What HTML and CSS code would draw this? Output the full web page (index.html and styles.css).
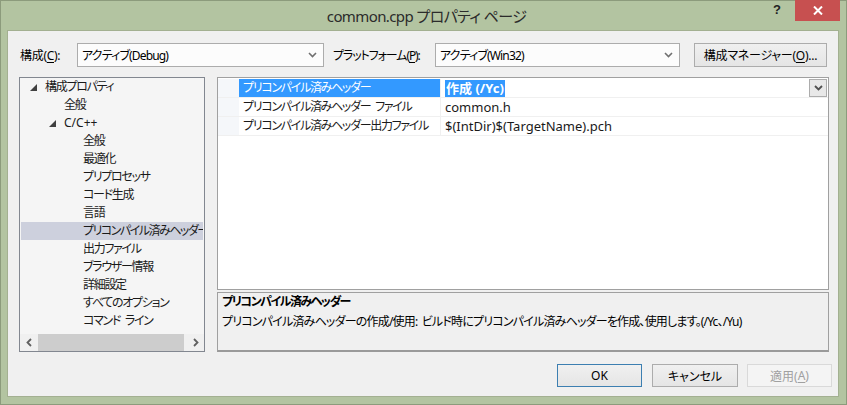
FILE: index.html
```html
<!DOCTYPE html>
<html lang="ja">
<head>
<meta charset="utf-8">
<title>common.cpp プロパティ ページ</title>
<link rel="stylesheet" href="styles.css">
</head>
<body>
<div class="window">
  <div class="titlebar">
    <div class="tb-spacer"></div>
    <div class="title">common.cpp プロパティ ページ</div>
    <div class="tb-controls">
      <span class="help">?</span>
      <span class="close"><svg width="10" height="9" viewBox="0 0 10 9"><path d="M1 0.5 L9 8.5 M9 0.5 L1 8.5" stroke="#fff" stroke-width="2"/></svg></span>
    </div>
  </div>
  <div class="client">
    <div class="toprow">
      <span class="lbl lbl-config">構成(<u>C</u>):</span>
      <div class="combo combo-config"><span class="combo-text">アクティブ(Debug)</span><svg class="chev" width="9" height="6" viewBox="0 0 9 6"><path d="M1 1 L4.5 4.5 L8 1" stroke="#707070" stroke-width="1.6" fill="none"/></svg></div>
      <span class="lbl lbl-platform">プラットフォーム(<u>P</u>):</span>
      <div class="combo combo-platform"><span class="combo-text">アクティブ(Win32)</span><svg class="chev" width="9" height="6" viewBox="0 0 9 6"><path d="M1 1 L4.5 4.5 L8 1" stroke="#707070" stroke-width="1.6" fill="none"/></svg></div>
      <div class="btn btn-manager">構成マネージャー(<u>O</u>)...</div>
    </div>
    <div class="main">
      <div class="tree">
        <div class="tree-list">
          <div class="node lv0"><span class="arrow"><svg width="7" height="7" viewBox="0 0 7 7"><polygon points="7,0 7,7 0,7" fill="#404040"/></svg></span>構成プロパティ</div>
          <div class="node lv1"><span class="arrow"></span>全般</div>
          <div class="node lv1 latin"><span class="arrow"><svg width="7" height="7" viewBox="0 0 7 7"><polygon points="7,0 7,7 0,7" fill="#404040"/></svg></span>C/C++</div>
          <div class="node lv2"><span class="arrow"></span>全般</div>
          <div class="node lv2"><span class="arrow"></span>最適化</div>
          <div class="node lv2"><span class="arrow"></span>プリプロセッサ</div>
          <div class="node lv2"><span class="arrow"></span>コード生成</div>
          <div class="node lv2"><span class="arrow"></span>言語</div>
          <div class="node lv2 selected"><span class="arrow"></span>プリコンパイル済みヘッダー</div>
          <div class="node lv2"><span class="arrow"></span>出力ファイル</div>
          <div class="node lv2"><span class="arrow"></span>ブラウザー情報</div>
          <div class="node lv2"><span class="arrow"></span>詳細設定</div>
          <div class="node lv2"><span class="arrow"></span>すべてのオプション</div>
          <div class="node lv2"><span class="arrow"></span>コマンド ライン</div>
        </div>
        <div class="hscroll">
          <span class="sb-btn"><svg width="6" height="9" viewBox="0 0 6 9"><path d="M5 1 L1.5 4.5 L5 8" stroke="#606060" stroke-width="1.8" fill="none"/></svg></span>
          <span class="sb-track"><span class="sb-thumb"></span></span>
          <span class="sb-btn"><svg width="6" height="9" viewBox="0 0 6 9"><path d="M1 1 L4.5 4.5 L1 8" stroke="#606060" stroke-width="1.8" fill="none"/></svg></span>
        </div>
      </div>
      <div class="rightpane">
        <div class="grid">
          <div class="prow active">
            <span class="gutter"></span>
            <span class="pname">プリコンパイル済みヘッダー</span>
            <span class="pvalue"><span class="sel">作成 (/Yc)</span><span class="dd"><svg width="9" height="6" viewBox="0 0 9 6"><path d="M1 1 L4.5 4.5 L8 1" stroke="#505050" stroke-width="1.8" fill="none"/></svg></span></span>
          </div>
          <div class="prow">
            <span class="gutter"></span>
            <span class="pname">プリコンパイル済みヘッダー ファイル</span>
            <span class="pvalue">common.h</span>
          </div>
          <div class="prow">
            <span class="gutter"></span>
            <span class="pname">プリコンパイル済みヘッダー出力ファイル</span>
            <span class="pvalue">$(IntDir)$(TargetName).pch</span>
          </div>
        </div>
        <div class="desc">
          <div class="desc-title">プリコンパイル済みヘッダー</div>
          <div class="desc-text">プリコンパイル済みヘッダーの作成/使用: ビルド時にプリコンパイル済みヘッダーを作成、使用します。(/Yc、/Yu)</div>
        </div>
      </div>
    </div>
    <div class="buttons">
      <div class="btn btn-ok">OK</div>
      <div class="btn btn-cancel">キャンセル</div>
      <div class="btn btn-apply">適用(<u>A</u>)</div>
    </div>
  </div>
</div>
</body>
</html>
```

FILE: styles.css
```css
* { box-sizing: border-box; }
html, body { margin: 0; padding: 0; }
body {
  font-family: "Noto Sans", "Noto Sans CJK JP", sans-serif;
  font-size: 12px;
  color: #000;
  font-feature-settings: "palt";
  background: #b3c4a1;
}
u { text-decoration: underline; text-underline-offset: 2px; }

.window {
  width: 847px;
  height: 405px;
  background: #b3c4a1;
  border: 1px solid #8c9b7c;
  display: flex;
  flex-direction: column;
}

.titlebar {
  height: 29px;
  display: grid;
  grid-template-columns: 1fr auto 1fr;
  align-items: start;
}
.title {
  font-size: 15px;
  color: #2b2b2b;
  line-height: 30px;
  padding-left: 6px;
  letter-spacing: -0.6px;
}
.tb-controls {
  display: flex;
  justify-content: flex-end;
  align-items: flex-start;
  margin-top: -1px;
  margin-right: 6px;
}
.help {
  font-family: "Liberation Sans", sans-serif;
  font-weight: bold;
  font-size: 13px;
  color: #222;
  margin-right: 14px;
  margin-top: 2px;
  line-height: 16px;
}
.close {
  width: 45px;
  height: 21px;
  background: #c75050;
  display: flex;
  align-items: center;
  justify-content: center;
}

.client {
  width: 832px;
  height: 367px;
  margin-left: 6px;
  background: #f0f0f0;
  border: 1px solid #a3b091;
  padding: 12px 6px 9px 11px;
  display: flex;
  flex-direction: column;
}

.toprow {
  height: 24px;
  display: flex;
  align-items: center;
  padding-left: 1px;
}
.lbl { white-space: nowrap; }
.lbl-config { width: 57px; letter-spacing: -0.3px; }
.lbl-platform { width: 102px; margin-left: 9px; letter-spacing: -1.1px; }
.combo {
  height: 24px;
  border: 1px solid #acacac;
  background: #fcfcfc;
  display: flex;
  align-items: center;
  justify-content: space-between;
  padding: 0 6px 0 4px;
}
.combo-text { letter-spacing: -0.85px; }
.combo-config { width: 247px; }
.combo-platform { width: 245px; }

.btn {
  height: 24px;
  border: 1px solid #acacac;
  background: linear-gradient(#f0f0f0, #e5e5e5);
  display: flex;
  align-items: center;
  justify-content: center;
  white-space: nowrap;
}
.btn-manager { width: 133px; margin-left: 14px; letter-spacing: -0.25px; }

.main {
  margin-top: 10px;
  height: 275px;
  margin-right: 3px;
  display: flex;
  gap: 12px;
}

.tree {
  width: 186px;
  border: 1px solid #828790;
  background: #f5f5f5;
  display: flex;
  flex-direction: column;
}
.tree-list {
  flex: 1;
  overflow: hidden;
}
.node {
  height: 18px;
  line-height: 18px;
  display: flex;
  align-items: center;
  white-space: pre;
  overflow: hidden;
  padding-left: 6px;
  color: #1a1a1a;
  letter-spacing: -1.3px;
  word-spacing: 3px;
}
.node.latin { letter-spacing: 0; }
.node.lv1 { padding-left: 25px; }
.node.lv2 { padding-left: 44px; }
.node.selected { background: #cdd0dd; margin: 0 1px; padding-left: 43px; letter-spacing: -1.5px; }
.arrow {
  width: 19px;
  flex: none;
  display: flex;
  align-items: center;
  padding-left: 4px;
  letter-spacing: 0;
}

.hscroll {
  height: 17px;
  display: flex;
  background: #f0f0f0;
}
.sb-btn {
  width: 17px;
  display: flex;
  align-items: center;
  justify-content: center;
}
.sb-track {
  flex: 1;
  display: flex;
  padding: 0 1px;
}
.sb-thumb {
  width: 146px;
  background: #cdcdcd;
}

.rightpane {
  flex: 1;
  display: flex;
  flex-direction: column;
  gap: 2px;
}
.grid {
  height: 213px;
  border: 1px solid #a0a0a0;
  background: #fff;
  padding-top: 1px;
}
.prow {
  height: 19px;
  display: flex;
  border-bottom: 1px solid #f0f0f0;
  white-space: nowrap;
}
.gutter {
  width: 21px;
  background: #f5f7fa;
  flex: none;
}
.pname {
  width: 202px;
  flex: none;
  padding-left: 4px;
  line-height: 18px;
  border-right: 1px solid #f0f0f0;
  color: #1a1a1a;
  letter-spacing: -1.3px;
  word-spacing: 3px;
  overflow: hidden;
}
.prow.active .pname {
  background: #3399ff;
  color: #fff;
}
.pvalue {
  flex: 1;
  padding-left: 4px;
  line-height: 18px;
  display: flex;
  align-items: center;
  justify-content: space-between;
  color: #1a1a1a;
  font-size: 13px;
}
.sel {
  background: #3399ff;
  color: #fff;
  font-weight: bold;
  padding: 0 1px;
  line-height: 17px;
}
.dd {
  width: 18px;
  height: 18px;
  border: 1px solid #acacac;
  background: #e8e8e8;
  display: flex;
  align-items: center;
  justify-content: center;
  margin-right: 1px;
}

.desc {
  height: 60px;
  border: 1px solid #a0a0a0;
  border-bottom: 2px solid #9a9a9a;
  background: #f0f0f0;
  padding: 1px 4px;
}
.desc-title {
  font-weight: bold;
  line-height: 16px;
  letter-spacing: -1.5px;
}
.desc-text {
  margin-top: 4px;
  line-height: 16px;
  white-space: nowrap;
  letter-spacing: -0.8px;
  word-spacing: 2px;
}

.buttons {
  margin-top: 12px;
  height: 23px;
  display: flex;
  justify-content: flex-end;
}
.buttons .btn { height: 23px; }
.btn-ok { width: 85px; border-color: #3c7fb1; }
.btn-cancel { width: 86px; margin-left: 10px; }
.btn-apply { width: 85px; margin-left: 9px; color: #a0a0a0; border-color: #d9d9d9; background: #f4f4f4; }
```
